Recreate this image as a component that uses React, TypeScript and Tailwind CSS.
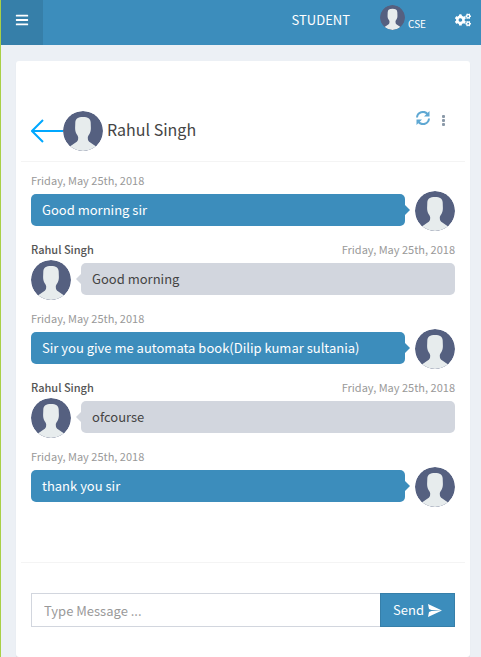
import { FaBars, FaCogs } from 'react-icons/fa';

type Message = { id: number; mine: boolean; text: string };

const AUTHOR = 'Rahul Singh';
const DATE = 'Friday, May 25th, 2018';

const messages: Message[] = [
  { id: 1, mine: true, text: 'Good morning sir' },
  { id: 2, mine: false, text: 'Good morning' },
  { id: 3, mine: true, text: 'Sir you give me automata book(Dilip kumar sultania)' },
  { id: 4, mine: false, text: 'ofcourse' },
  { id: 5, mine: true, text: 'thank you sir' },
];

function Avatar({ className }: { className: string }) {
  return (
    <svg viewBox="0 0 40 40" className={`shrink-0 rounded-full ${className}`} aria-hidden="true">
      <circle cx="20" cy="20" r="20" fill="#556080" />
      <path
        fill="#e7eced"
        d="M20 6c-5 0-7.400 1.500-7.700 5.500l-.2 5.500c0 3 .6 4.600 1.600 6.200.8 1.200 1.500 2 1.500 3.500 0 2.500-.8 4-2.500 4.900L7.200 35.300A20 20 0 0 0 32.800 35.300L27.300 31.600c-1.700-.9-2.500-2.400-2.500-4.900 0-1.500.7-2.300 1.500-3.500 1-1.600 1.600-3.200 1.600-6.200l-.2-5.500C27.400 7.500 25 6 20 6Z"
      />
    </svg>
  );
}

function BackArrow() {
  return (
    <svg viewBox="0 0 32 24" className="h-6 w-8" fill="none" stroke="#00a8ff" strokeWidth="2" aria-hidden="true">
      <path d="M32 12H1M12 1 1 12l11 11" />
    </svg>
  );
}

function RefreshIcon() {
  return (
    <svg viewBox="0 0 14 14" className="size-3.5" fill="none" stroke="currentColor" strokeWidth="2" aria-hidden="true">
      <path d="M1 6.500A6 6 0 0 1 11.500 3M13 7.500A6 6 0 0 1 2.500 11" />
      <path d="M13.500 0v5.500H8ZM.5 14V8.500H6Z" fill="currentColor" stroke="none" />
    </svg>
  );
}

function DotsIcon() {
  return (
    <svg viewBox="0 0 3 11" className="h-[11px] w-[3px]" fill="currentColor" aria-hidden="true">
      <rect width="3" height="3" rx="1" />
      <rect y="4" width="3" height="3" rx="1" />
      <rect y="8" width="3" height="3" rx="1" />
    </svg>
  );
}

function SendIcon() {
  return (
    <svg viewBox="0 0 14 13" className="h-[13px] w-3.5" fill="currentColor" aria-hidden="true">
      <path d="M0 0 14 6.500 3.500 6 1 5ZM1 8l2.500-1L14 6.500 0 13Z" />
    </svg>
  );
}

function ChatMessage({ message }: { message: Message }) {
  const { mine, text } = message;
  return (
    <li>
      <div className="flex h-5 justify-between text-[11px] leading-[18px]">
        {!mine && <span className="font-medium text-[#555]">{AUTHOR}</span>}
        <time className="text-[#999]">{DATE}</time>
      </div>
      <div className={`flex items-start gap-2.5 ${mine ? 'flex-row-reverse' : ''}`}>
        <Avatar className="size-10" />
        <p
          className={`relative mt-[3px] h-8 flex-1 rounded-[5px] px-[11px] text-[13px] leading-8 ${
            mine ? 'bg-[#3c8dbc] text-white' : 'bg-[#d2d6de] text-[#444]'
          }`}
        >
          {text}
          <span
            aria-hidden="true"
            className={`absolute top-[11px] border-y-[5px] border-y-transparent ${
              mine
                ? 'left-full border-l-[5px] border-l-[#3c8dbc]'
                : 'right-full border-r-[5px] border-r-[#d2d6de]'
            }`}
          />
        </p>
      </div>
    </li>
  );
}

export default function App() {
  return (
    <div className="min-h-screen border-l border-[#a9d046] bg-[#ecf0f5] font-['Noto_Sans_CJK_SC',sans-serif] text-[#333]">
      <header className="flex h-[45px] items-center bg-[#3c8dbc] text-white">
        <button type="button" aria-label="Toggle menu" className="flex h-full w-[42px] items-start justify-center bg-[#367fa9] pt-[13px]">
          <FaBars className="size-3.5" />
        </button>
        <nav className="ml-auto flex h-full items-start pr-2.5">
          <a href="#student" className="pt-2.5 text-[13px] leading-5">STUDENT</a>
          <a href="#profile" className="ml-[30px] flex gap-[3px] pt-[5px]">
            <Avatar className="size-[25px]" />
            <span className="pt-2.5 text-[10px] leading-[18px]">CSE</span>
          </a>
          <button type="button" aria-label="Settings" className="ml-[29px] pt-3">
            <FaCogs className="size-4" />
          </button>
        </nav>
      </header>

      <main className="px-[15px] pt-4 pr-[11px]">
        <section className="rounded-[3px] bg-white px-[5px] shadow-[0_1px_1px_rgba(0,0,0,0.1)]">
          <div className="flex h-[101px] items-end border-b border-[#f4f4f4] px-2.5 pb-2.5">
            <a href="#back" aria-label="Back"><span className="flex h-10 items-center"><BackArrow /></span></a>
            <Avatar className="size-10" />
            <h1 className="ml-1 h-10 text-base leading-9 text-[#444]">{AUTHOR}</h1>
            <div className="ml-auto flex h-10 items-start pr-2.5">
              <button type="button" aria-label="Refresh" className="text-[#5fa8d3]"><RefreshIcon /></button>
              <button type="button" aria-label="More options" className="ml-3 pt-1 text-[#8a99a8]"><DotsIcon /></button>
            </div>
          </div>

          <ul className="flex h-[400px] flex-col gap-[9px] px-2.5 pt-[9px]">
            {messages.map((m) => (
              <ChatMessage key={m.id} message={m} />
            ))}
          </ul>

          <form className="flex border-t border-[#f4f4f4] px-2.5 py-[30px]" onSubmit={(e) => e.preventDefault()}>
            <input
              type="text"
              aria-label="Message"
              placeholder="Type Message ..."
              className="h-[34px] min-w-0 flex-1 border border-r-0 border-[#d2d6de] px-3 text-[13px] outline-none placeholder:text-[#999]"
            />
            <button type="submit" className="flex h-[34px] w-[75px] items-center justify-center gap-1 border border-[#367fa9] bg-[#3c8dbc] text-[13px] text-white">
              Send <SendIcon />
            </button>
          </form>
        </section>
      </main>
    </div>
  );
}
